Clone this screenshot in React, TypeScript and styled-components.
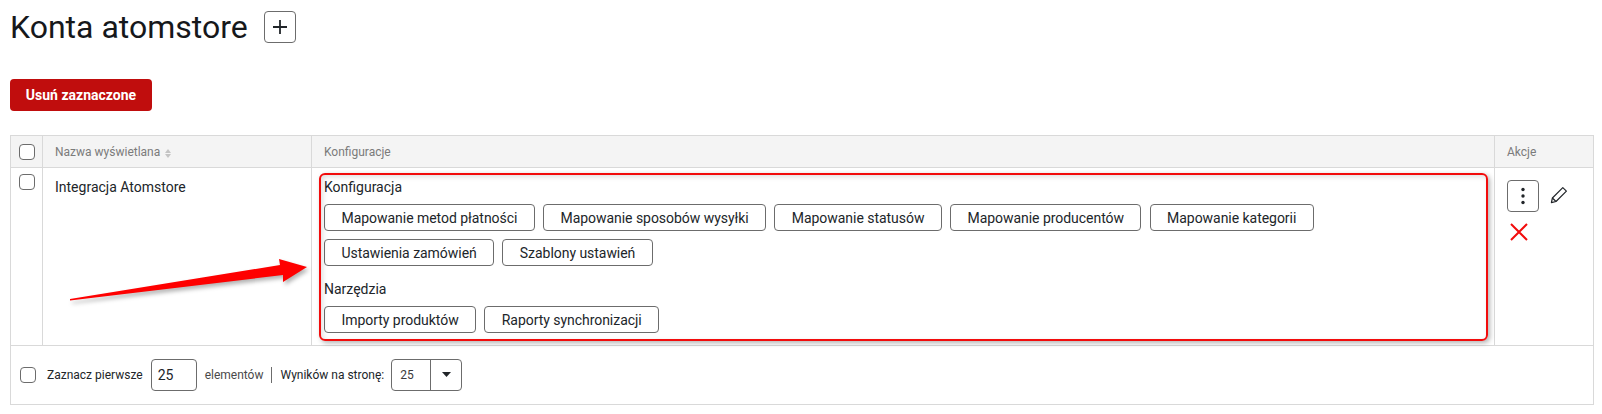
import React from "react";
import styled, { createGlobalStyle } from "styled-components";

const Global = createGlobalStyle`
  html, body { margin: 0; padding: 0; background: #fff; }
  body { font-family: Roboto, "Liberation Sans", sans-serif; color: #212529; }
  * { box-sizing: border-box; }
`;

const Page = styled.div`
  position: relative;
  width: 1602px;
  height: 414px;
  padding: 11px 8px 0 10px;
  overflow: hidden;
`;

const TitleRow = styled.div`
  display: flex;
  align-items: center;
  gap: 16px;
  height: 32px;
`;

const Title = styled.h1`
  margin: 0;
  font-size: 32px;
  font-weight: 400;
  line-height: 32px;
  color: #16181b;
`;

const IconButton = styled.button`
  display: flex;
  align-items: center;
  justify-content: center;
  flex: none;
  width: 32px;
  height: 32px;
  padding: 0;
  background: #fff;
  border: 1px solid #6c6c6c;
  border-radius: 4px;
  color: #212529;
`;

const DangerButton = styled.button`
  display: block;
  width: 142px;
  height: 32px;
  margin: 36px 0 24px;
  padding: 0;
  background: #c00d0d;
  border: 0;
  border-radius: 4px;
  color: #fff;
  font: 700 14px Roboto, sans-serif;
`;

const Table = styled.div`
  width: 1584px;
  height: 270px;
  border: 1px solid #d9d9d9;
  display: grid;
  grid-template-columns: 32px 269px 1183px 1fr;
  grid-template-rows: 32px 178px 1fr;
`;

const HeadCell = styled.div<{ $last?: boolean }>`
  display: flex;
  align-items: center;
  padding-left: 12px;
  background: #f4f4f4;
  border-bottom: 1px solid #d9d9d9;
  border-right: ${(p) => (p.$last ? "0" : "1px solid #d9d9d9")};
  color: #7b7b7b;
  font-size: 12px;
`;

const CheckHead = styled(HeadCell)`
  padding-left: 8px;
`;

const SortIcon = styled.svg`
  margin: 3px 0 0 5px;
`;

const Cell = styled.div<{ $last?: boolean }>`
  border-bottom: 1px solid #d9d9d9;
  border-right: ${(p) => (p.$last ? "0" : "1px solid #d9d9d9")};
  font-size: 14px;
`;

const CheckCell = styled(Cell)`
  padding: 6px 0 0 8px;
`;

const NameCell = styled(Cell)`
  padding: 11px 0 0 12px;
  line-height: 16px;
  color: #212529;
`;

const ConfigCell = styled(Cell)`
  padding: 11px 12px 0;
`;

const ActionsCell = styled(Cell)`
  padding: 12px 0 0 12px;
`;

const Check = styled.span`
  display: block;
  width: 16px;
  height: 16px;
  border: 1px solid #6c6c6c;
  border-radius: 4px;
  background: #fff;
`;

const GroupLabel = styled.div`
  font-size: 14px;
  line-height: 16px;
  color: #212529;
`;

const SecondLabel = styled(GroupLabel)`
  margin-top: 15px;
`;

const ButtonRow = styled.div`
  display: flex;
  flex-wrap: wrap;
  gap: 8px 8.1px;
  margin-top: 9px;
`;

const ConfigButton = styled.button`
  height: 27px;
  padding: 0 16.5px;
  background: #fff;
  border: 1px solid #6c6c6c;
  border-radius: 4px;
  color: #212529;
  font: 400 14px Roboto, sans-serif;
  letter-spacing: -0.04px;
  white-space: nowrap;
`;

const ActionTop = styled.div`
  display: flex;
  align-items: flex-start;
  gap: 11px;
`;

const PencilIcon = styled.svg`
  margin-top: 6px;
`;

const DeleteIcon = styled.svg`
  display: block;
  margin: 11px 0 0 3px;
`;

const Footer = styled.div`
  grid-column: 1 / -1;
  display: flex;
  align-items: center;
  padding: 0 0 1px 9px;
  font-size: 12px;
  color: #212529;
`;

const FooterLabel = styled.span`
  margin-left: 11px;
  white-space: nowrap;
`;

const CountInput = styled.div`
  display: flex;
  align-items: center;
  width: 46px;
  height: 32px;
  margin-left: 8px;
  padding-left: 6px;
  border: 1px solid #6c6c6c;
  border-radius: 4px;
  font-size: 14px;
`;

const Muted = styled.span`
  margin-left: 8px;
  color: #4a4a4a;
  white-space: nowrap;
`;

const Divider = styled.span`
  width: 1px;
  height: 16px;
  margin: 0 8px;
  background: #6c6c6c;
`;

const PageSelect = styled.div`
  display: flex;
  width: 71px;
  height: 32px;
  margin-left: 7px;
  border: 1px solid #6c6c6c;
  border-radius: 4px;
`;

const SelectValue = styled.div`
  display: flex;
  align-items: center;
  width: 39px;
  padding-left: 8px;
  border-right: 1px solid #6c6c6c;
  color: #3a3a3a;
`;

const SelectCaret = styled.div`
  display: flex;
  flex: 1;
  align-items: center;
  justify-content: center;
`;

const Highlight = styled.div`
  position: absolute;
  left: 318.5px;
  top: 172.5px;
  width: 1169.5px;
  height: 168px;
  border: 2px solid #f20c0c;
  border-radius: 6px;
  box-shadow: 2px 2px 5px rgba(0, 0, 0, 0.3), inset 2px 2px 5px rgba(0, 0, 0, 0.12);
  pointer-events: none;
`;

const Arrow = styled.svg`
  position: absolute;
  left: 60px;
  top: 250px;
  filter: drop-shadow(2px 3px 2px rgba(0, 0, 0, 0.3));
`;

const configButtons = [
  "Mapowanie metod płatności",
  "Mapowanie sposobów wysyłki",
  "Mapowanie statusów",
  "Mapowanie producentów",
  "Mapowanie kategorii",
  "Ustawienia zamówień",
  "Szablony ustawień",
];
const toolButtons = ["Importy produktów", "Raporty synchronizacji"];

export default function App() {
  return (
    <Page>
      <Global />
      <TitleRow>
        <Title>Konta atomstore</Title>
        <IconButton aria-label="Dodaj">
          <svg width="18" height="18" viewBox="0 0 18 18" fill="none" stroke="#212529" strokeWidth="1.8">
            <path d="M9 2v14M2 9h14" />
          </svg>
        </IconButton>
      </TitleRow>
      <DangerButton>Usuń zaznaczone</DangerButton>
      <Table>
        <CheckHead>
          <Check />
        </CheckHead>
        <HeadCell>
          Nazwa wyświetlana
          <SortIcon width="6" height="9" viewBox="0 0 6 9" fill="#c4c4c4">
            <path d="M3 0l3 4H0zM3 9L0 5h6z" />
          </SortIcon>
        </HeadCell>
        <HeadCell>Konfiguracje</HeadCell>
        <HeadCell $last>Akcje</HeadCell>

        <CheckCell>
          <Check />
        </CheckCell>
        <NameCell>Integracja Atomstore</NameCell>
        <ConfigCell>
          <GroupLabel>Konfiguracja</GroupLabel>
          <ButtonRow>
            {configButtons.map((b) => (
              <ConfigButton key={b}>{b}</ConfigButton>
            ))}
          </ButtonRow>
          <SecondLabel>Narzędzia</SecondLabel>
          <ButtonRow>
            {toolButtons.map((b) => (
              <ConfigButton key={b}>{b}</ConfigButton>
            ))}
          </ButtonRow>
        </ConfigCell>
        <ActionsCell $last>
          <ActionTop>
            <IconButton aria-label="Więcej">
              <svg width="4" height="18" viewBox="0 0 4 18" fill="#212529">
                <circle cx="2" cy="2.5" r="1.7" />
                <circle cx="2" cy="9" r="1.7" />
                <circle cx="2" cy="15.5" r="1.7" />
              </svg>
            </IconButton>
            <PencilIcon width="18" height="18" viewBox="0 0 18 18" fill="none" stroke="#212529" strokeWidth="1.2">
              <path d="M12.8 1.6l3.6 3.5L6 15.5l-4.6 1.1 1-4.6z" strokeLinejoin="round" />
              <path d="M2.4 12l3.6 3.5" />
            </PencilIcon>
          </ActionTop>
          <DeleteIcon width="18" height="18" viewBox="0 0 18 18" fill="none" stroke="#f20c0c" strokeWidth="2">
            <path d="M1 1l16 16M17 1L1 17" />
          </DeleteIcon>
        </ActionsCell>

        <Footer>
          <Check />
          <FooterLabel>Zaznacz pierwsze</FooterLabel>
          <CountInput>25</CountInput>
          <Muted>elementów</Muted>
          <Divider />
          <span>Wyników na stronę:</span>
          <PageSelect>
            <SelectValue>25</SelectValue>
            <SelectCaret>
              <svg width="9" height="5" viewBox="0 0 9 5" fill="#212529">
                <path d="M0 0h9L4.5 5z" />
              </svg>
            </SelectCaret>
          </PageSelect>
        </Footer>
      </Table>
      <Highlight />
      <Arrow width="260" height="60" viewBox="0 0 260 60">
        <path d="M10 49L220 15 219 9 247 17 223 32 223 25 10 50.5z" fill="#fe0000" />
      </Arrow>
    </Page>
  );
}
